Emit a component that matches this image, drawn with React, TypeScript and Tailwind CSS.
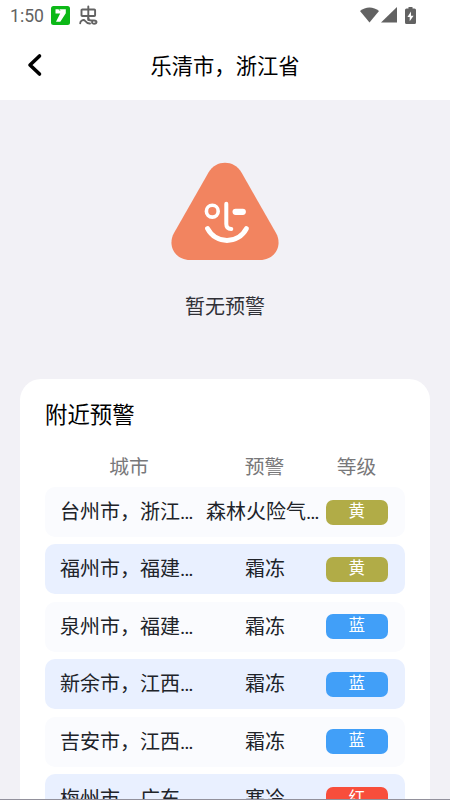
import { clsx } from "clsx";

type Level = "yellow" | "blue" | "red";

interface Warning {
  city: string;
  type: string;
  level: Level;
}

const warnings: Warning[] = [
  { city: "台州市，浙江…", type: "森林火险气…", level: "yellow" },
  { city: "福州市，福建…", type: "霜冻", level: "yellow" },
  { city: "泉州市，福建…", type: "霜冻", level: "blue" },
  { city: "新余市，江西…", type: "霜冻", level: "blue" },
  { city: "吉安市，江西…", type: "霜冻", level: "blue" },
  { city: "梅州市，广东…", type: "寒冷", level: "red" },
];

const levels: Record<Level, { label: string; className: string }> = {
  yellow: { label: "黄", className: "bg-[#b1ac47]" },
  blue: { label: "蓝", className: "bg-[#419ff8]" },
  red: { label: "红", className: "bg-[#f84e3b]" },
};

const StatusBar = () => (
  <div className="flex h-[30px] items-center pr-[34px] pl-[10px] text-[#626262]">
    <span className="w-[41px] pt-0.5 text-[17.6px] leading-5">1:50</span>
    <svg className="h-[19px] w-[19px]" viewBox="0 0 19 19">
      <rect width="19" height="19" rx="2.5" fill="#0cb817" />
      <path d="M4.5 3.2h10.3v4L9.3 15.8H5L9.2 7.5H4.5z" fill="#fff" />
      <path d="M7.6 2.5 9 4.8" stroke="#0cb817" strokeWidth="0.8" />
    </svg>
    <svg
      className="ml-[9px] h-5 w-[19px]"
      viewBox="0 0 19 20"
      fill="none"
      stroke="currentColor"
      strokeWidth="1.9"
      strokeLinecap="round"
      strokeLinejoin="round"
    >
      <path d="M9.3 1.5V15M3.3 4.500h12q.8 0 .8.8v4.900q0 .8-.8.800h-12q-.8 0-.8-.8V5.300q0-.8.8-.8z" />
      <path d="M1.200 18.300c0-3 3.500-4.300 5-2.300s2.300 2.800 4.800 2.500M9.300 13c0 1.800.8 2.500 3 2.500h2.700q2.500 0 2.500 1.600T15 18.700t-1.800-2" />
    </svg>
    <div className="ml-auto flex items-center">
      <svg className="h-4 w-[19px]" viewBox="0 0 19 16" fill="currentColor">
        <path d="M0 4C5.5-.8 13.5-.8 19 4L9.5 15.5z" />
      </svg>
      <svg className="ml-[2px] h-4 w-4" viewBox="0 0 16 16" fill="currentColor">
        <path d="M16 0v15.5H0z" />
      </svg>
      <svg className="ml-[8px] h-[17px] w-[11px]" viewBox="0 0 11 17">
        <path
          d="M3.5 0h4v1.5H9.5Q11 1.5 11 3v12.5q0 1.5-1.5 1.5h-8Q0 17 0 15.5V3q0-1.5 1.5-1.5h2z"
          fill="#626262"
        />
        <path d="M6 4.5 2.4 10h2.3v4.2L8.6 8.7H6z" fill="#fff" />
      </svg>
    </div>
  </div>
);

const Header = () => (
  <header className="relative flex h-[70px] items-center justify-center pt-[3px]">
    <svg
      className="absolute top-[23px] left-[26px] h-6 w-[18px]"
      viewBox="0 0 18 24"
      fill="none"
      stroke="#000"
      strokeWidth="3.6"
      strokeLinecap="round"
      strokeLinejoin="round"
    >
      <path d="M13.5 3 4 12l9.5 9" />
    </svg>
    <h1 className="text-[21.3px] leading-8 text-black">乐清市，浙江省</h1>
  </header>
);

const EmptyState = () => (
  <section className="flex h-[279px] flex-col items-center pt-[62px]">
    <svg className="h-[98px] w-[108px]" viewBox="0 0 108 98">
      <path
        d="M37.5 10.5C45-2.5 63-2.5 70.5 10.5L105 71C112 83.5 104 98 89 98H19C4 98-4 83.5 3 71z"
        fill="#f28460"
      />
      <g fill="none" stroke="#fff" strokeLinecap="round" strokeLinejoin="round">
        <circle cx="41.3" cy="49.2" r="5.9" strokeWidth="3.6" />
        <path d="M55.3 41.8V62q0 4.8 5 5" strokeWidth="4" />
        <path d="M64.6 49.8h7.2" strokeWidth="6.2" />
        <path d="M36.5 66.5C45 82.5 67 82.5 75.5 66.5" strokeWidth="4.8" />
      </g>
    </svg>
    <p className="mt-[32px] text-[20px] leading-[30px] text-[#303036]">暂无预警</p>
  </section>
);

const WarningRow = ({ warning, highlighted }: { warning: Warning; highlighted: boolean }) => {
  const level = levels[warning.level];
  const isLong = warning.type.length > 5;

  return (
    <li
      className={clsx(
        "flex h-[50px] shrink-0 items-center rounded-[10px] text-[20px] leading-[30px] whitespace-nowrap text-[#202329]",
        highlighted ? "bg-[#e9f0ff]" : "bg-[#fafbfe]"
      )}
    >
      <span className="w-[161px] pl-[15px]">{warning.city}</span>
      <span className={clsx("w-[118px]", isLong ? "text-left" : "text-center")}>{warning.type}</span>
      <span
        className={clsx(
          "ml-[1.5px] h-[25px] w-[62.5px] rounded-[7px] text-center text-[16.5px] leading-6 text-white",
          level.className
        )}
      >
        {level.label}
      </span>
    </li>
  );
};

export default function App() {
  return (
    <div className="flex h-[800px] w-[450px] flex-col overflow-hidden bg-[#f2f1f6] font-['Roboto','Noto_Sans_CJK_SC',sans-serif]">
      <div className="h-[100px] shrink-0 bg-white">
        <StatusBar />
        <Header />
      </div>
      <EmptyState />
      <section className="mx-5 flex h-[420px] shrink-0 flex-col overflow-hidden rounded-t-[21px] bg-white px-[25px] pt-5">
        <h2 className="text-[22.4px] leading-8 text-black">附近预警</h2>
        <div className="mt-[22px] flex h-[34px] shrink-0 text-[19.8px] leading-[30px] text-[#78787a]">
          <span className="w-[168px] text-center">城市</span>
          <span className="w-[103px] text-center">预警</span>
          <span className="w-[81px] text-center">等级</span>
        </div>
        <ul className="flex flex-col gap-[7.45px]">
          {warnings.map((warning, index) => (
            <WarningRow key={warning.city} warning={warning} highlighted={index % 2 === 1} />
          ))}
        </ul>
      </section>
      <div className="h-px shrink-0 bg-[#92919c]" />
    </div>
  );
}
